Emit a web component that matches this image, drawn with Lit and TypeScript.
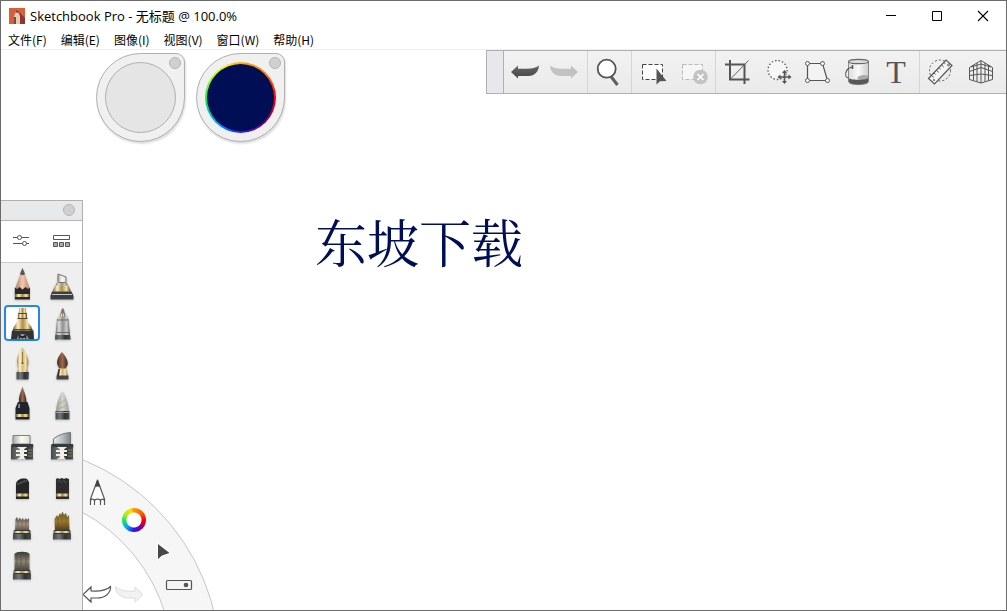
import { LitElement, html, svg, css, TemplateResult } from "lit";
import { customElement, state } from "lit/decorators.js";
import { classMap } from "lit/directives/class-map.js";

interface Tool {
  id: string;
  label: string;
  art: TemplateResult;
}

const menus = ["文件(F)", "编辑(E)", "图像(I)", "视图(V)", "窗口(W)", "帮助(H)"];

const arrow = svg`<path d="M3 16 10 9.600V12.800H19C24 12.800 28 12 31 9.600 30.500 16 27 20 20 20H10V22.500Z"/>`;

const cursor = svg`<path d="M20.500 12.500V28.500L24 25.300 30.500 25Z" fill="#555"/>`;

const toolGroups: Tool[][] = [
  [
    { id: "undo", label: "撤销", art: svg`<g fill="url(#ink)">${arrow}</g>` },
    { id: "redo", label: "重做", art: svg`<g fill="#c2c2c2" transform="translate(33 0) scale(-1 1)">${arrow}</g>` },
  ],
  [
    {
      id: "zoom",
      label: "缩放",
      art: svg`<path d="M19 20.500 25.500 29" stroke="#606060" stroke-width="3"/>
        <circle cx="14.700" cy="12.700" r="9" fill="#fff" stroke="#555" stroke-width="1.800"/>`,
    },
  ],
  [
    {
      id: "select",
      label: "选择",
      art: svg`<rect x="6.500" y="8.500" width="20" height="15" fill="#fff" stroke="#444" stroke-dasharray="4 2"/>${cursor}`,
    },
    {
      id: "deselect",
      label: "取消选择",
      art: svg`<rect x="6.500" y="8.500" width="20" height="15" fill="#f6f6f6" stroke="#bbb" stroke-dasharray="4 2"/>
        <circle cx="24.500" cy="21" r="7.300" fill="#c3c3c3"/>
        <path d="M21.500 18 27.500 24M27.500 18 21.500 24" stroke="#fff" stroke-width="1.600"/>`,
    },
  ],
  [
    {
      id: "crop",
      label: "裁剪",
      art: svg`<path d="M10 4V23.500H29.500M5 8.500H24.500V28" fill="none" stroke="#555" stroke-width="2"/>
        <path d="M10.500 23 28.500 4.500" stroke="#666"/>`,
    },
    {
      id: "transform",
      label: "快速变换",
      art: svg`<circle cx="17.500" cy="14" r="9.500" fill="#f7f7f7" stroke="#555" stroke-width="1.300" stroke-dasharray="1.500 2"/>
        <path d="M18.500 21H30.500M24.500 15V27" stroke="#555" stroke-width="1.600"/>
        <path d="M17.500 21 20.500 18.500V23.500ZM31.500 21 28.500 18.500V23.500ZM24.500 14 22 17H27ZM24.500 28 22 25H27Z" fill="#555"/>`,
    },
    {
      id: "distort",
      label: "扭曲",
      art: svg`<path d="M7.500 7.500H22.500L27.500 24.500H7.500Z" fill="#f3f3f3" stroke="#555" stroke-width="1.200"/>
        <g fill="#fff" stroke="#555"><circle cx="7.500" cy="7.500" r="2"/><circle cx="22.500" cy="7.500" r="2"/>
        <circle cx="27.500" cy="24.500" r="2"/><circle cx="7.500" cy="24.500" r="2"/></g>`,
    },
    {
      id: "fill",
      label: "填充",
      art: svg`<path d="M8.500 6V26C10 29.500 26.500 29.500 28.500 26V6Z" fill="url(#pail)" stroke="#888"/>
        <path d="M9 22.500C14 24.500 23 24 28 21V26C26.500 29.200 10.500 29.200 9 26Z" fill="#585858"/>
        <path d="M17 22C18 19.500 24 18 28 19.500V22C25 24 20 24 17 22Z" fill="#aaa"/>
        <ellipse cx="18.500" cy="5.500" rx="10" ry="2.200" fill="#ddd" stroke="#666" stroke-width="1.200"/>
        <path d="M12.500 11C7 11.500 4.500 17 6 20.500 7 22 8 22 9 22" fill="none" stroke="#555" stroke-width="1.100"/>
        <path d="M12.500 9V13" stroke="#555" stroke-width="1.500"/>`,
    },
    { id: "text", label: "文本", art: html`T` },
  ],
  [
    {
      id: "ruler",
      label: "标尺",
      art: svg`<circle cx="16" cy="14.500" r="10.500" fill="none" stroke="#555" stroke-dasharray="2 2"/>
        <path d="M4.500 22.500 22 4 28 9.500 10.500 28Z" fill="#f5f5f5" stroke="#555" stroke-width="1.200"/>
        <path d="M7.500 19.500 9.700 21.500M10 17 11.500 18.400M12.500 14.300 14.700 16.300M15 11.700 16.500 13M17.500 9 19.700 11M20 6.500 21.500 7.800" stroke="#555"/>
        <circle cx="24.500" cy="9" r="1" fill="none" stroke="#666"/><circle cx="10" cy="24" r="1" fill="#666"/>`,
    },
    {
      id: "perspective",
      label: "透视",
      art: svg`<path d="M5.500 11.500 17 4.500 28.500 11.500V23.500L17 27 5.500 23.500ZM17 4.500V27M5.500 15.500 17 11.500 28.500 15.500M5.500 19.500 17 18 28.500 19.500M9.500 9V24.500M13 7V25.500M21 7V25.500M24.500 9V24.500M7 11 17 8 27 11"
        fill="none" stroke="#555"/>`,
    },
  ],
];

const ferrule = (x: number, y: number, w: number, h: number) =>
  svg`<rect x=${x} y=${y} width=${w} height=${h} fill="url(#gold)"/>`;

const baseBlock = svg`<rect x="9.500" y="25.500" width="17" height="3" fill="url(#gold)"/>
  <path d="M10 25.500H26M9.500 28.500H26.500" stroke="#33383f"/>
  <path d="M9 29H27V34.500H9Z" fill="url(#steelDark)"/>`;

const eraserBody = svg`<path d="M7.500 19H29L29.500 22H7Z" fill="#373b40"/>
  <path d="M7 22H29V34.500H7Z" fill="url(#steelDark)"/>
  <path d="M13 22H23C22 23.500 20 23.500 20 25H23V27H20V29H23V31H20C20 33 21 33 22 34.500H13C14 33 16 33 16 31H12V29H16V27H12V25H16C16 23.500 14 23.500 13 22Z" fill="#efede5"/>
  <path d="M24 25H28.500M24 28H28.500M24 31H28.500" stroke="#a58e57" stroke-width=".8"/>`;

const brushes: Tool[] = [
  {
    id: "pencil",
    label: "铅笔",
    art: svg`<path d="M18.500 3 11 24V27H26V24Z" fill="url(#wood)"/>
      <path d="M18.500 3 16 9C17 10.500 20 10.500 21 9Z" fill="#55555a"/>
      <path d="M10.800 22.500 13 24 15.500 22 18.500 24.500 21.500 22 24 24 26 22.500V34.500H10.800Z" fill="#29292b"/>${ferrule(11, 29, 15, 3)}`,
  },
  {
    id: "airbrush",
    label: "喷枪",
    art: svg`<path d="M14 9 22 12V17.500H14Z" fill="url(#rubber)" stroke="#77756d"/>
      <path d="M12.500 18H23L24 20.500H11.500Z" fill="url(#steel)"/>
      <path d="M11 20.500H24.500L27 26.500H8.500Z" fill="url(#gold)"/>
      <path d="M8 26.500H27.500L29.500 31V34.500H6.500V31Z" fill="#3c3e43"/><path d="M8 29.500H28" stroke="#c5c5c5"/>`,
  },
  {
    id: "inkpen",
    label: "喷枪笔",
    art: svg`<path d="M15 3H22V7L23 9V14H14V9L15 7Z" fill="url(#gold)"/>
      <path d="M14.500 8.500H22.500M13.500 13.500H23.500" stroke="#55492f"/>
      <path d="M14 14H23C23.500 19 28 20 28.500 26H9C9 20 13.500 19 14 14Z" fill="url(#gold)"/>
      <path d="M8 25.500H29.500L30 34H7Z" fill="#303338"/><path d="M9 24.500H28.500" stroke="#4b4636"/>
      <path d="M13 34C13.500 27.500 23.500 27.500 24.500 34Z" fill="#aaa"/><path d="M15 33.500 16 31 18.500 32.500 21 31 22 33.500" fill="none" stroke="#222" stroke-width="2"/>`,
  },
  {
    id: "marker",
    label: "马克笔",
    art: svg`<path d="M18.500 3.500 16 9 13 14 11 34.500H26.500L24.500 14 21.500 9Z" fill="url(#steel)"/>
      <path d="M18 3.500H19.500L21 9H16.500Z" fill="#777"/><path d="M16.500 8.500H21V11.500H16Z" fill="url(#gold)"/>
      <path d="M13 15H24.500M12.500 27.500H25.500" stroke="#696c70"/><path d="M11.500 30H26L26.500 34.500H11Z" fill="url(#steelDark)"/>`,
  },
  {
    id: "nib",
    label: "钢笔",
    art: svg`<path d="M18.500 2.500C15 7 12.500 13 13 18L14.500 27H23L24.500 18C24.500 12 21.500 7 18.500 2.500Z" fill="url(#goldLight)"/>
      <path d="M18.500 7V17" stroke="#806d43" stroke-width=".8"/><circle cx="18.500" cy="18" r="1.100" fill="#695838"/>
      <path d="M13.500 25H23.500V28H13.500Z" fill="url(#goldLight)"/><path d="M12.500 27H25L24.500 34.500H12.500Z" fill="url(#steelDark)"/>`,
  },
  {
    id: "round",
    label: "圆头画笔",
    art: svg`<path d="M18 7C14.500 11 12 16 13.500 20L15.500 24H21.500L23.500 20C24.500 16 22 12 18 7Z" fill="url(#hair)"/>
      <path d="M14.500 23.500H22.500L24 31H13Z" fill="url(#goldLight)"/><path d="M14.500 24H16L15 31H13Z" fill="#332a20"/><path d="M12.500 30.500H24.500V34.500H12.500Z" fill="#444"/>`,
  },
  {
    id: "sumi",
    label: "毛笔",
    art: svg`<path d="M18.500 1.500C17 7 14.500 11 15 17H22.500C22.500 11 20 7 18.500 1.500Z" fill="url(#hair)"/>
      <path d="M14 17H23.500L25.500 23V34.500H11.500V23Z" fill="#20242b"/><path d="M14.500 19H16V23H14Z" fill="#879096"/>${ferrule(12, 29, 13, 3)}`,
  },
  {
    id: "smudge",
    label: "涂抹",
    art: svg`<path d="M18.500 6C15 12 12.500 18 12 26H25C24.500 18 22 12 18.500 6Z" fill="url(#stone)"/>
      <path d="M14 18C18 19 20 15 22 14M13.500 23C18 24 22 20 23.500 19" stroke="#a8a8a1" fill="none"/>
      <path d="M11.500 26H25.500V34.500H11.500Z" fill="url(#steelDark)"/><path d="M12 27.500H25" stroke="#a0a09a"/>`,
  },
  {
    id: "eraser-hard",
    label: "硬橡皮擦",
    art: svg`<path d="M9 10.500H26V19H9Z" fill="url(#rubber)" stroke="#83837b"/>${eraserBody}`,
  },
  {
    id: "eraser-soft",
    label: "软橡皮擦",
    art: svg`<path d="M9.500 14C14 10 20 8 26.500 7.500V19H9.500Z" fill="url(#blade)" stroke="#73777a"/>${eraserBody}`,
  },
  {
    id: "charcoal",
    label: "炭笔",
    art: svg`<path d="M12 19C13 13.500 19 13 23 14L25 17V34H12Z" fill="#252525"/>
      <path d="M13 19C16 20 18 15 23 16" stroke="#4a4a4a" stroke-width="2" fill="none"/>${ferrule(12, 28.5, 13, 3)}`,
  },
  {
    id: "chalk",
    label: "粉笔",
    art: svg`<path d="M12 14 14 13 15 14 18 13 20 14 22 13 25 14V34H12Z" fill="#2c2c2c"/>
      <path d="M13 17 16 15 17 18 20 15 21 18 24 16" stroke="#484848" fill="none"/>${ferrule(12, 28.5, 13, 3)}`,
  },
  {
    id: "bristle",
    label: "硬毛刷",
    art: svg`<path d="M11 26 11.500 14 13 12 14 15 16 12.500 17 15 19 13 20 15.500 22 13 23 15 25 13V26Z" fill="url(#bristle)"/>
      <path d="M14 15V21M18 16V22M22 15V21" stroke="#645a50" stroke-width=".6"/>${baseBlock}`,
  },
  {
    id: "fan",
    label: "扇形刷",
    art: svg`<path d="M11 26 10.500 14 13 10 14 12 16 8 17 10 18.500 6.500 20 10 22 8 23 12 25 10 25.500 26Z" fill="url(#ochre)"/>
      <path d="M14 12V20M18 10V18M22 12V20" stroke="#6d5927" stroke-width=".6"/>${baseBlock}`,
  },
  {
    id: "flat",
    label: "平头刷",
    art: svg`<path d="M10.500 26V9C12 6 24 6 25.500 9V26Z" fill="url(#felt)"/>
      <path d="M13 9V20M17 8V22M22 8V21" stroke="#504b3e" stroke-width=".6"/>${baseBlock}`,
  },
];

const gradient = (id: string, across: boolean, stops: string[]) => svg`
  <linearGradient id=${id} x1="0" y1="0" x2=${across ? 1 : 0} y2=${across ? 0 : 1}>
    ${stops.map((c, i) => svg`<stop offset=${i / (stops.length - 1)} stop-color=${c}></stop>`)}
  </linearGradient>`;

@customElement("app-root")
export class AppRoot extends LitElement {
  static styles = css`
    :host {
      display: block;
      height: 100vh;
      color: #000;
      font: 12px/18px "Open Sans", "Noto Sans CJK SC", sans-serif;
    }
    * { box-sizing: border-box; }
    button {
      margin: 0;
      padding: 0;
      border: 0;
      background: none;
      color: inherit;
      font: inherit;
    }
    svg { display: block; overflow: visible; }
    .window {
      height: 100%;
      display: flex;
      flex-direction: column;
      border: 1px solid #6b6b6b;
      background: #fff;
      overflow: hidden;
    }
    .titlebar { display: flex; align-items: center; height: 29px; padding-left: 8px; }
    .title { flex: 1; margin: 0 0 0 5px; font-size: 13px; font-weight: 400; }
    .caption { width: 46px; height: 29px; display: grid; place-items: center; }
    .menubar {
      display: flex;
      gap: 14px;
      height: 20px;
      padding-left: 7px;
      border-bottom: 1px solid #efefef;
      font-family: "Noto Sans CJK SC", sans-serif;
    }
    .workspace { position: relative; flex: 1; min-height: 0; }
    .canvas-text {
      position: absolute;
      left: 314px;
      top: 159px;
      margin: 0;
      color: #000f55;
      font: 400 52px/64px "Noto Serif CJK SC", "Noto Sans CJK SC", serif;
    }
    .pucks { position: absolute; left: 95px; top: 3px; display: flex; gap: 11px; }
    .puck {
      position: relative;
      width: 89px;
      height: 89px;
      display: grid;
      place-items: center;
      border: 1px solid #b0b0b0;
      border-radius: 50% 9px 50% 50%;
      background: #f0f0f0;
      box-shadow: 1px 2px 2px #0002;
    }
    .swatch { width: 71px; height: 71px; border-radius: 50%; background: #e5e5e5; border: 1px solid #b0b0b0; }
    .swatch.color {
      border: 2px solid transparent;
      background: linear-gradient(#000f55, #000f55) padding-box,
        conic-gradient(#ffb000, #ff7800 45deg, #f00 90deg, #70006c 135deg, #2a18ff 180deg, #00a0ff 220deg, #16e45a 265deg, #a4ff20 305deg, #fff000 335deg, #ffb000) border-box;
    }
    .dot { width: 12px; height: 12px; border-radius: 50%; background: #d0d0d0; border: 1px solid #b4b4b4; }
    .puck .dot { position: absolute; top: 3px; right: 3px; }
    .toolbar {
      position: absolute;
      top: 0;
      right: 0;
      height: 44px;
      display: flex;
      border: 1px solid #b0b0b0;
      border-right: 0;
      background: linear-gradient(#f2f2f2, #eaeaea);
    }
    .grip { width: 17px; background: #e6e8eb; border-right: 1px solid #b0b0b0; }
    .group { display: flex; align-items: center; padding-right: 3px; }
    .group + .group { border-left: 1px solid #d4d5d8; }
    .group:last-child { padding-right: 6px; }
    .tool { width: 40px; height: 40px; display: grid; place-items: center; color: #555; }
    .tool.text { font: 32px/40px "Liberation Serif", serif; }
    .palette {
      position: absolute;
      top: 150px;
      bottom: 0;
      left: 0;
      width: 82px;
      display: flex;
      flex-direction: column;
      background: #efefef;
      border: 1px solid #b0b0b0;
      border-width: 1px 1px 0 0;
    }
    .palette-head { height: 20px; display: flex; justify-content: flex-end; align-items: center; padding: 0 7px 1px 0; background: #e8e9ea; border-bottom: 1px solid #b4b4b4; }
    .palette-tabs { height: 42px; display: flex; justify-content: space-around; align-items: center; padding-bottom: 1px; background: #fff; border-bottom: 1px solid #ccc; }
    .brushes { display: grid; grid-template-columns: 36px 36px; gap: 4px; padding: 2px 3px; }
    .brush { width: 36px; height: 36px; border-radius: 4px; }
    .brush svg { filter: drop-shadow(0 1px 1px #0003); }
    .brush.selected { background: #fff; box-shadow: inset 0 0 0 2px #2388e8; }
    .lagoon { position: absolute; left: 82px; bottom: 0; width: 134px; height: 152px; overflow: hidden; }
    .lagoon .arc { width: 134px; height: 152px; }
    .lagoon button { position: absolute; width: 30px; height: 30px; }
    .lag-brush { left: 0; top: 18px; }
    .lag-color { left: 36px; top: 47px; display: grid; place-items: center; }
    .lag-pick { left: 66px; top: 77px; }
    .lag-view { left: 81px; top: 110px; }
    .lag-undo { left: 0; top: 120px; }
    .lag-redo { left: 31px; top: 120px; }
    .ring {
      width: 24px;
      height: 24px;
      border-radius: 50%;
      background: radial-gradient(#fff 7px, #0000 8px),
        conic-gradient(#ff9800, #ff5a00 50deg, #f00 90deg, #8a0090 135deg, #2410ff 180deg, #00a8ff 225deg, #20e060 265deg, #a0f020 300deg, #ffe000 340deg, #ff9800);
    }
  `;

  @state() private brush = "inkpen";

  private icon(art: TemplateResult, size = 32) {
    return html`<svg width=${size} height=${size} viewBox="0 0 ${size} ${size}" aria-hidden="true">${art}</svg>`;
  }

  private lagoonArrow = svg`<path d="M0 16.500 8 9V13C16 13.500 23 13 27.500 8.500 28 15 22 20 14 20H8V24Z"/>`;

  render() {
    return html`<div class="window">
      <header class="titlebar">
        <svg width="16" height="16" viewBox="0 0 16 16" aria-hidden="true">
          <defs>
            ${gradient("ink", false, ["#666", "#444"])}
            ${gradient("pail", true, ["#ddd", "#fafafa", "#ccc"])}
            ${gradient("gold", true, ["#6b5932", "#fff0bd", "#a98d50", "#f7e3a5", "#4d3d24"])}
            ${gradient("goldLight", true, ["#a68b52", "#fff3cc", "#d5b975", "#f4e2af", "#99804c"])}
            ${gradient("steel", true, ["#666", "#ddd", "#8e9295", "#c9cacb", "#555"])}
            ${gradient("blade", true, ["#e8ebec", "#b9c0c3", "#7b8489"])}
            ${gradient("steelDark", true, ["#44474a", "#75787b", "#303336", "#4b4e51"])}
            ${gradient("wood", true, ["#a47c69", "#f0c9ae", "#b98369"])}
            ${gradient("hair", true, ["#452b20", "#9c6b4f", "#3b261e"])}
            ${gradient("stone", true, ["#999993", "#d4d4cf", "#a2a29c"])}
            ${gradient("rubber", true, ["#aaa", "#fbfaf2", "#dedcd2"])}
            ${gradient("bristle", false, ["#4a4542", "#a39383", "#594a3e"])}
            ${gradient("ochre", false, ["#695b2e", "#9b792c", "#4c3817"])}
            ${gradient("felt", false, ["#383831", "#8c8474", "#434036"])}
          </defs>
          <path d="M0 0H16V16H0Z" fill="#d95f3c"/><path d="M8 2 16 10V16H6Z" fill="#8d3535"/>
          <path d="M8 1.500 5 8V16H11V8Z" fill="#e9c9ad"/><path d="M8 1.500 6.800 4.500H9.200Z" fill="#333"/><path d="M5 9H7V16H5Z" fill="#6b4f4b"/>
        </svg>
        <h1 class="title">Sketchbook Pro - 无标题 @ 100.0%</h1>
        <button class="caption" aria-label="最小化"><svg width="10" height="10"><path d="M0 4.500H10" stroke="#000"/></svg></button>
        <button class="caption" aria-label="最大化"><svg width="10" height="10"><path d="M.5.5H9.500V9.500H.5Z" fill="none" stroke="#000"/></svg></button>
        <button class="caption" aria-label="关闭"><svg width="10" height="10"><path d="M0 0 10 10M10 0 0 10" stroke="#000" stroke-width="1.100"/></svg></button>
      </header>
      <nav class="menubar">${menus.map((m) => html`<button>${m}</button>`)}</nav>
      <main class="workspace">
        <p class="canvas-text">东坡下载</p>
        <div class="pucks">
          <button class="puck" aria-label="画笔大小"><span class="swatch"></span><span class="dot"></span></button>
          <button class="puck" aria-label="颜色"><span class="swatch color"></span><span class="dot"></span></button>
        </div>
        <div class="toolbar" role="toolbar">
          <div class="grip"></div>
          ${toolGroups.map((group) => html`<div class="group">
            ${group.map((t) => html`<button class=${classMap({ tool: true, text: t.id === "text" })} aria-label=${t.label}>
              ${t.id === "text" ? t.art : this.icon(t.art)}
            </button>`)}
          </div>`)}
        </div>
        <div class="lagoon">
          <svg class="arc" viewBox="83 458 134 152" aria-hidden="true">
            <circle cx="0" cy="664" r="196.500" fill="none" stroke="#f6f6f6" stroke-width="48"/>
            <circle cx="0" cy="664" r="220.400" fill="none" stroke="#c6c6c6"/>
            <circle cx="0" cy="664" r="172.700" fill="none" stroke="#c6c6c6"/>
          </svg>
          <button class="lag-brush" aria-label="画笔">${this.icon(svg`
            <path d="M14.500 4 7.500 22V29H21.500V22Z" fill="#fff"/>
            <path d="M14.500 4 7.500 23V29M14.500 4 21.500 23V29M11.500 29V25M17.500 29V25M7.500 25C8 22.500 11 22.500 11.500 25 12 22.500 17 22.500 17.500 25 18 22.500 21 22.500 21.500 25" fill="none" stroke="#555" stroke-width="1.200"/>
            <path d="M14.500 3 11.800 11 14.500 10.500 17.200 11Z" fill="#444"/>`, 30)}</button>
          <button class="lag-color" aria-label="颜色"><span class="ring"></span></button>
          <button class="lag-pick" aria-label="工具">${this.icon(svg`
            <path d="M9 9V24L13 20.500 20.500 18Z" fill="#484848" stroke="#fff" stroke-width="2.500" paint-order="stroke"/>`, 30)}</button>
          <button class="lag-view" aria-label="视图">${this.icon(svg`
            <rect x="2.500" y="12.500" width="25" height="9" rx="1" fill="#f4f4f4" stroke="#555" stroke-width="1.200"/><circle cx="22" cy="17" r="2.300" fill="#555"/>`, 30)}</button>
          <button class="lag-undo" aria-label="撤销">${this.icon(svg`<g fill="#fff" stroke="#555" stroke-width="1.200">${this.lagoonArrow}</g>`, 30)}</button>
          <button class="lag-redo" aria-label="重做">${this.icon(svg`<g fill="#f2f2f2" stroke="#dcdcdc" transform="translate(29 0) scale(-1 1)">${this.lagoonArrow}</g>`, 30)}</button>
        </div>
        <aside class="palette">
          <div class="palette-head"><span class="dot"></span></div>
          <div class="palette-tabs">
            <button aria-label="画笔属性"><svg width="18" height="14"><path d="M1 3.500H17M1 9.500H17" stroke="#555"/><circle cx="7.500" cy="3.500" r="2" fill="#fff" stroke="#555"/><circle cx="12.500" cy="9.500" r="2" fill="#fff" stroke="#555"/></svg></button>
            <button aria-label="画笔库"><svg width="18" height="14"><path d="M.5 1.500H16.500V5.500H.5Z" fill="#fff" stroke="#555"/><path d="M.5 8.500H4.500V12.500H.5ZM6.500 8.500H10.500V12.500H6.500ZM12.500 8.500H16.500V12.500H12.500Z" fill="#aaa" stroke="#555"/></svg></button>
          </div>
          <div class="brushes">
            ${brushes.map((b) => html`<button
              class=${classMap({ brush: true, selected: b.id === this.brush })}
              aria-label=${b.label}
              @click=${() => (this.brush = b.id)}
            >${this.icon(b.art, 36)}</button>`)}
          </div>
        </aside>
      </main>
    </div>`;
  }
}
